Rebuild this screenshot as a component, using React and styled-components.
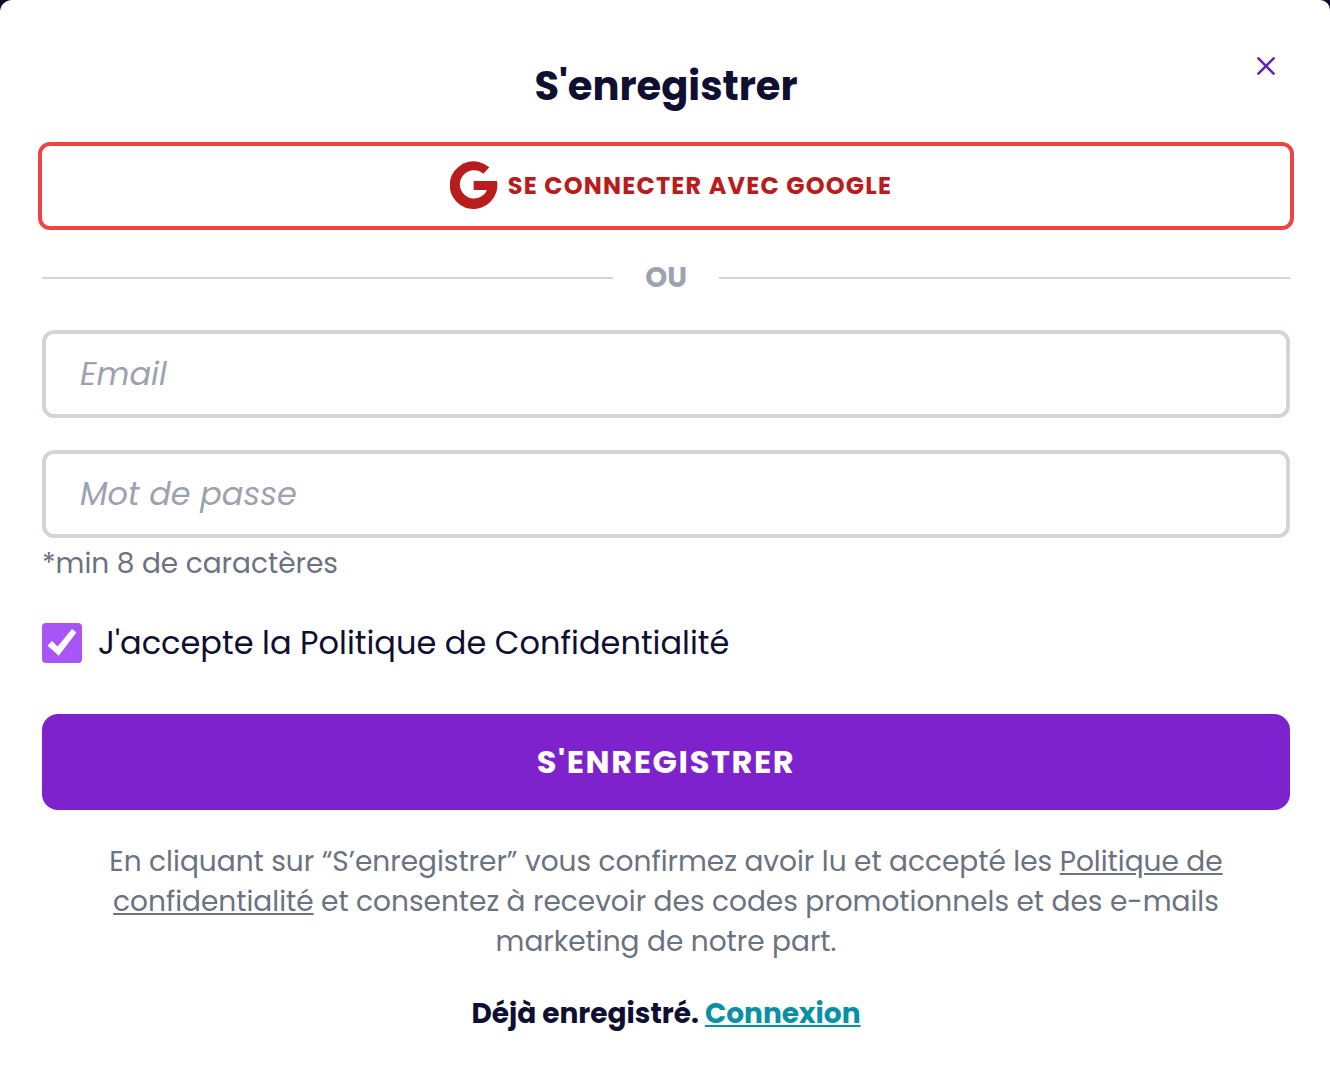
import React, { useState } from 'react'
import styled, { createGlobalStyle } from 'styled-components'

const GlobalStyle = createGlobalStyle`
  *, *::before, *::after {
    box-sizing: border-box;
  }
  body {
    margin: 0;
    background: #0b0b2b;
    font-family: Poppins, Inter, sans-serif;
    color: #0f1031;
  }
  button, input {
    font-family: inherit;
  }
`

const Modal = styled.main`
  position: relative;
  min-height: 100vh;
  padding: 56px 40px 46px 42px;
  border-radius: 12px 10px 0 0;
  background: #fff;
`

const CloseButton = styled.button`
  position: absolute;
  top: 50px;
  right: 48px;
  display: flex;
  padding: 6px;
  border: none;
  background: transparent;
  color: #6b21a8;
  cursor: pointer;
`

const Title = styled.h1`
  margin: 0 0 26px;
  font-size: 40px;
  line-height: 60px;
  font-weight: 700;
  text-align: center;
`

const GoogleButton = styled.button`
  display: flex;
  align-items: center;
  justify-content: center;
  gap: 10px;
  width: calc(100% + 8px);
  height: 88px;
  margin: 0 -4px;
  padding: 0 0 2px 10px;
  border: 4px solid #ef4444;
  border-radius: 12px;
  background: #fff;
  color: #b91c1c;
  font-size: 24px;
  font-weight: 700;
  letter-spacing: 0.05em;
  text-transform: uppercase;
  cursor: pointer;
`

const Divider = styled.div`
  display: flex;
  align-items: center;
  gap: 32px;
  margin: 27px 0 31px;
  color: #9ca3af;
  font-size: 28px;
  line-height: 42px;
  font-weight: 700;
  &::before,
  &::after {
    content: '';
    flex: 1;
    height: 2px;
    background: #d1d5db;
  }
`

const Field = styled.input`
  display: block;
  width: 100%;
  height: 88px;
  margin-top: ${props => (props.$spaced ? '32px' : '0')};
  padding: 0 34px;
  border: 4px solid #d1d5db;
  border-radius: 12px;
  background: #fff;
  color: #0f1031;
  font-size: 32px;
  &::placeholder {
    color: #9ca3af;
    font-style: italic;
    opacity: 1;
  }
  &:focus {
    outline: none;
    border-color: #a855f7;
  }
`

const Hint = styled.p`
  margin: 6px 0 39px;
  color: #6b7280;
  font-size: 28px;
  line-height: 40px;
`

const Consent = styled.label`
  display: flex;
  align-items: center;
  gap: 16px;
  font-size: 32px;
  line-height: 40px;
`

const Checkbox = styled.input`
  appearance: none;
  display: block;
  flex: none;
  width: 40px;
  height: 40px;
  margin: 0;
  border: 2px solid #a855f7;
  border-radius: 4px;
  background: #fff;
  &:checked {
    border: none;
    background: #a855f7;
  }
  &:checked::before {
    content: '';
    display: block;
    height: 100%;
    background: #fff;
    clip-path: polygon(14% 57%, 25% 45%, 39% 59%, 75% 15%, 86% 24%, 42% 82%);
  }
`

const SubmitButton = styled.button`
  display: block;
  width: 100%;
  height: 96px;
  margin: 51px 0 32px;
  border: none;
  border-radius: 16px;
  background: #7e22ce;
  color: #fff;
  font-size: 32px;
  font-weight: 700;
  letter-spacing: 0.05em;
  text-transform: uppercase;
  cursor: pointer;
`

const Legal = styled.p`
  margin: 0 0 32px;
  padding: 0 64px;
  color: #6b7280;
  font-size: 28px;
  line-height: 40px;
  text-align: center;
`

const LegalLink = styled.a`
  color: inherit;
`

const Login = styled.p`
  margin: 0;
  font-size: 28px;
  line-height: 40px;
  font-weight: 700;
  text-align: center;
`

const LoginLink = styled.a`
  color: #0891a5;
`

const GoogleIcon = () => (
  <svg width="48" height="48" viewBox="0 0 144 144" fill="currentColor" aria-hidden="true">
    <path d="M118 19A71.5 71.5 0 1 0 141 60H71V87H111A42.5 42.5 0 1 1 100 38Z" />
  </svg>
)

const CloseIcon = () => (
  <svg
    width="20"
    height="20"
    viewBox="0 0 20 20"
    fill="none"
    stroke="currentColor"
    strokeWidth="2.6"
    strokeLinecap="round"
    aria-hidden="true"
  >
    <path d="M2.400 2.400L17.600 17.600M17.600 2.400L2.400 17.600" />
  </svg>
)

function App() {
  const [email, setEmail] = useState('')
  const [password, setPassword] = useState('')
  const [accepted, setAccepted] = useState(true)

  return (
    <>
      <GlobalStyle />
      <Modal>
        <CloseButton type="button" aria-label="Fermer">
          <CloseIcon />
        </CloseButton>
        <Title>S'enregistrer</Title>
        <GoogleButton type="button">
          <GoogleIcon />
          <span>Se connecter avec Google</span>
        </GoogleButton>
        <Divider>OU</Divider>
        <form onSubmit={e => e.preventDefault()}>
          <Field
            type="email"
            placeholder="Email"
            aria-label="Email"
            value={email}
            onChange={e => setEmail(e.target.value)}
          />
          <Field
            $spaced
            type="password"
            placeholder="Mot de passe"
            aria-label="Mot de passe"
            aria-describedby="password-hint"
            value={password}
            onChange={e => setPassword(e.target.value)}
          />
          <Hint id="password-hint">*min 8 de caractères</Hint>
          <Consent>
            <Checkbox
              type="checkbox"
              checked={accepted}
              onChange={e => setAccepted(e.target.checked)}
            />
            <span>J'accepte la Politique de Confidentialité</span>
          </Consent>
          <SubmitButton type="submit">S'enregistrer</SubmitButton>
        </form>
        <Legal>
          En cliquant sur “S’enregistrer” vous confirmez avoir lu et accepté les{' '}
          <LegalLink href="#confidentialite">Politique de confidentialité</LegalLink> et consentez à
          recevoir des codes promotionnels et des e-mails marketing de notre part.
        </Legal>
        <Login>
          Déjà enregistré. <LoginLink href="#connexion">Connexion</LoginLink>
        </Login>
      </Modal>
    </>
  )
}

export default App
